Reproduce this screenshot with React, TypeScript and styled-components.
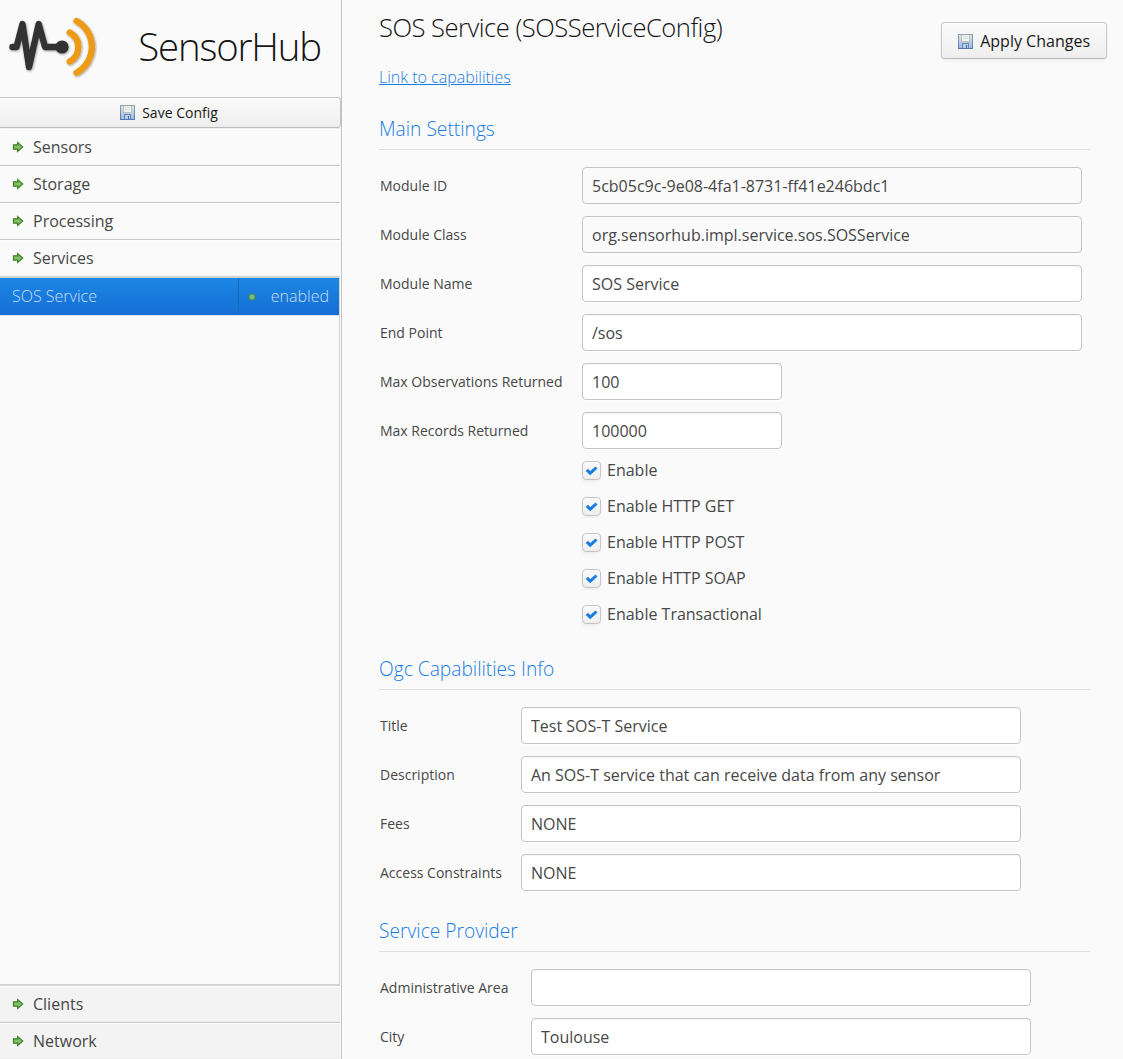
import React from "react";
import styled, { createGlobalStyle, css } from "styled-components";

const GlobalStyle = createGlobalStyle`
  *, *::before, *::after { box-sizing: border-box; }
  html, body { margin: 0; padding: 0; }
  body {
    height: 1059px;
    overflow: hidden;
    background: #fafafa;
    color: #474747;
    font-family: "Open Sans", "Noto Sans", sans-serif;
    font-size: 16px;
    font-weight: 400;
    line-height: 25px;
  }
`;

const Page = styled.div`
  display: flex;
  height: 1059px;
  overflow: hidden;
`;

const Sidebar = styled.aside`
  display: flex;
  flex-direction: column;
  flex: none;
  width: 342px;
  border-right: 1px solid #c5c5c5;
`;

const Brand = styled.header`
  display: flex;
  align-items: center;
  justify-content: space-between;
  flex: none;
  height: 97px;
  padding: 0 20px 3px 6px;
`;

const BrandName = styled.h1`
  margin: 0 0 2px;
  color: #141414;
  font-size: 38.4px;
  font-weight: 300;
  line-height: 48px;
  letter-spacing: -1.152px;
  white-space: nowrap;
`;

const Button = styled.button<{ $wide?: boolean }>`
  display: flex;
  align-items: center;
  justify-content: center;
  flex: none;
  gap: 7px;
  height: 37px;
  padding: 2px 16px 0;
  border: 1px solid #c5c5c5;
  border-bottom-color: #bcbcbc;
  border-radius: 4px;
  background: linear-gradient(#fafafa 2%, #efefef 98%);
  box-shadow: inset 0 1px 0 #fff, inset 0 -1px 0 #ebebeb, 0 2px 3px rgba(0, 0, 0, 0.05);
  color: #191919;
  font: 400 16px/25px "Open Sans", "Noto Sans", sans-serif;
  white-space: nowrap;
  ${(p) =>
    p.$wide &&
    css`
      gap: 7.5px;
      height: 31px;
      width: 341px;
      padding: 0 17.5px 0 15px;
      border-left: 0;
      border-radius: 0 4px 4px 0;
      font-size: 14px;
    `}
`;

const Modules = styled.nav`
  display: flex;
  flex-direction: column;
  flex: 1;
  width: 340px;
  margin: 1px 0 -1px;
`;

const ModuleHeader = styled.div<{ $shaded?: boolean; $open?: boolean }>`
  display: flex;
  align-items: center;
  flex: none;
  gap: 8px;
  height: 37px;
  padding: 0 11px;
  border-bottom: 1px solid ${(p) => (p.$open ? "#d3d3d3" : "#c9c9c9")};
  background: ${(p) => (p.$shaded ? "#f3f3f3" : "#fafafa")};
  box-shadow: inset 0 1px 0 #fff, inset 0 -1px 0 ${(p) => (p.$shaded ? "#efefef" : "#f5f5f5")};
`;

const ModuleBody = styled.div`
  flex: 1;
  border: solid #d3d3d3;
  border-width: 1px 1px 2px 0;
`;

const ModuleRow = styled.div`
  display: flex;
  height: 38px;
  border-bottom: 1px solid #d4dfea;
  background: linear-gradient(#1b87e3, #166ed5);
  color: #c8def4;
  font-weight: 300;
`;

const ModuleName = styled.div`
  display: flex;
  align-items: center;
  width: 239px;
  padding-left: 12px;
  border-right: 1px solid #1d69b4;
`;

const ModuleState = styled.div`
  display: flex;
  align-items: center;
  justify-content: space-between;
  flex: 1;
  padding: 0 10px 0 5px;
`;

const Content = styled.main`
  flex: 1;
  min-width: 0;
  padding: 0 33px 0 37px;
`;

const TopBar = styled.div`
  display: flex;
  align-items: flex-start;
  justify-content: space-between;
  height: 104px;
  margin-right: -17px;
  padding-top: 11px;
`;

const ApplySlot = styled.div`
  padding-top: 11px;
`;

const Title = styled.h2`
  margin: 0 0 20px;
  color: #141414;
  font-size: 25.6px;
  font-weight: 300;
  line-height: 34px;
  letter-spacing: -0.51px;
  white-space: nowrap;
`;

const Link = styled.a`
  display: block;
  color: #197de1;
  font-weight: 300;
  text-decoration: underline;
`;

const Section = styled.section<{ $gap: number }>`
  margin-bottom: ${(p) => p.$gap}px;
`;

const SectionTitle = styled.h3`
  height: 46px;
  margin: 0 0 17px;
  padding-top: 10px;
  border-bottom: 1px solid #dfdfdf;
  color: #197de1;
  font-size: 19.2px;
  font-weight: 300;
  line-height: 30px;
`;

const Field = styled.label<{ $labelWidth: number }>`
  display: grid;
  grid-template-columns: ${(p) => p.$labelWidth}px auto;
  align-items: center;
  justify-content: start;
  height: 37px;
  margin-bottom: 12px;
  padding-left: 1px;
  font-size: 14px;
`;

const Input = styled.input<{ $short?: boolean }>`
  width: ${(p) => (p.$short ? 200 : 500)}px;
  height: 37px;
  padding: 0 9px;
  border: 1px solid #c5c5c5;
  border-radius: 4px;
  outline: 0;
  background: #fff;
  box-shadow: inset 0 1px 0 #f7f7f7, 0 1px 0 #fff;
  color: #474747;
  font: 400 16px/25px "Open Sans", "Noto Sans", sans-serif;

  &:read-only {
    background: #fafafa;
    box-shadow: none;
  }
`;

const Checks = styled.div`
  display: grid;
  grid-auto-rows: 36px;
  margin: -9px 0 0 203px;
`;

const Check = styled.label`
  display: flex;
  align-items: center;
  gap: 6px;
`;

const CheckBox = styled.span`
  display: grid;
  place-items: center;
  width: 19px;
  height: 19px;
  margin-top: 1px;
  border: 1px solid #c5c5c5;
  border-radius: 4px;
  background: linear-gradient(#fafafa 2%, #efefef 98%);
  box-shadow: inset 0 1px 0 #fff, inset 0 -1px 0 #ebebeb, 0 2px 3px rgba(0, 0, 0, 0.05);
`;

const Logo = () => (
  <svg width="96" height="68" viewBox="0 0 96 68" fill="none" strokeLinecap="round" strokeLinejoin="round">
    <defs>
      <filter id="logo-shadow" x="-10%" y="-10%" width="125%" height="125%">
        <feDropShadow dx="0.7" dy="0.9" stdDeviation="0.8" floodOpacity="0.4" />
      </filter>
    </defs>
    <g filter="url(#logo-shadow)" strokeWidth="6.4">
      <path d="M6.500 34h4L16.500 11 23 54 32.700 11 39 34H55" stroke="#333" />
      <circle cx="56" cy="34" r="6.600" fill="#333" />
      <path d="M63.800 19.500A16.600 16.600 0 0 1 63.800 48.500" stroke="#ed9b17" />
      <path d="M70.600 8A29.500 29.500 0 0 1 70.600 59.700" stroke="#ed9b17" />
    </g>
  </svg>
);

const Floppy = () => (
  <svg width="15" height="15" viewBox="0 0 15 15" shapeRendering="crispEdges">
    <defs>
      <linearGradient id="disk" x1="0" y1="0" x2="0" y2="1">
        <stop offset="0" stopColor="#dce5ed" />
        <stop offset="1" stopColor="#9eb9e0" />
      </linearGradient>
      <linearGradient id="disk-edge" x1="0" y1="0" x2="0" y2="1">
        <stop offset="0" stopColor="#94a1a8" />
        <stop offset="1" stopColor="#5579b5" />
      </linearGradient>
    </defs>
    <rect x=".5" y=".5" width="14" height="14" rx="1" fill="url(#disk)" stroke="url(#disk-edge)" />
    <path d="M3 1h9v7H3z" fill="#b9c4c2" />
    <path d="M4 1h7v6H4z" fill="#f1f3ee" />
    <path d="M5 2h5v1H5zM5 4h5v1H5z" fill="#d6dcd6" />
    <path d="M4 9h7v5H4z" fill="#6585bb" />
    <path d="M5 10h5v4H5z" fill="#b9cce9" />
    <path d="M8 11h1v3H8z" fill="#4a6ea9" />
    <path d="M1 14h13v1H1z" fill="#5579b5" />
  </svg>
);

const Arrow = () => (
  <svg width="14" height="14" viewBox="0 0 14 14">
    <path d="M2.500 4.800h4.200V2.500l5 4.500-5 4.500V9.200H2.500z" fill="#86bd6c" stroke="#3b8223" strokeWidth="1.200" />
  </svg>
);

const Dot = () => (
  <svg width="16" height="16" viewBox="0 0 16 16">
    <circle cx="8" cy="8" r="3.100" fill="#80bb7a" stroke="#358a45" strokeWidth=".9" />
    <circle cx="8" cy="8" r="3.900" fill="none" stroke="#4f9c58" strokeWidth=".9" strokeDasharray="1 2.063" strokeDashoffset=".5" />
  </svg>
);

const Tick = () => (
  <svg width="13" height="11" viewBox="0 0 13 11">
    <path d="M1.800 4.900 5.200 8.200 11.500 2.500" fill="none" stroke="#197de1" strokeWidth="3" />
  </svg>
);

type FieldData = { label: string; value: string; short?: boolean; fixed?: boolean };

const mainFields: FieldData[] = [
  { label: "Module ID", value: "5cb05c9c-9e08-4fa1-8731-ff41e246bdc1", fixed: true },
  { label: "Module Class", value: "org.sensorhub.impl.service.sos.SOSService", fixed: true },
  { label: "Module Name", value: "SOS Service" },
  { label: "End Point", value: "/sos" },
  { label: "Max Observations Returned", value: "100", short: true },
  { label: "Max Records Returned", value: "100000", short: true },
];

const capabilityFields: FieldData[] = [
  { label: "Title", value: "Test SOS-T Service" },
  { label: "Description", value: "An SOS-T service that can receive data from any sensor" },
  { label: "Fees", value: "NONE" },
  { label: "Access Constraints", value: "NONE" },
];

const providerFields: FieldData[] = [
  { label: "Administrative Area", value: "" },
  { label: "City", value: "Toulouse" },
];

const options = ["Enable", "Enable HTTP GET", "Enable HTTP POST", "Enable HTTP SOAP", "Enable Transactional"];

const Fields = ({ items, labelWidth }: { items: FieldData[]; labelWidth: number }) => (
  <>
    {items.map((f) => (
      <Field key={f.label} $labelWidth={labelWidth}>
        <span>{f.label}</span>
        <Input defaultValue={f.value} readOnly={f.fixed} $short={f.short} />
      </Field>
    ))}
  </>
);

export default function App() {
  return (
    <>
      <GlobalStyle />
      <Page>
        <Sidebar>
          <Brand>
            <Logo />
            <BrandName>SensorHub</BrandName>
          </Brand>
          <Button $wide>
            <Floppy />
            Save Config
          </Button>
          <Modules>
            {["Sensors", "Storage", "Processing", "Services"].map((name) => (
              <ModuleHeader key={name} $open={name === "Services"}>
                <Arrow />
                {name}
              </ModuleHeader>
            ))}
            <ModuleBody>
              <ModuleRow>
                <ModuleName>SOS Service</ModuleName>
                <ModuleState>
                  <Dot />
                  enabled
                </ModuleState>
              </ModuleRow>
            </ModuleBody>
            {["Clients", "Network"].map((name) => (
              <ModuleHeader key={name} $shaded>
                <Arrow />
                {name}
              </ModuleHeader>
            ))}
          </Modules>
        </Sidebar>
        <Content>
          <TopBar>
            <div>
              <Title>SOS Service (SOSServiceConfig)</Title>
              <Link href="#">Link to capabilities</Link>
            </div>
            <ApplySlot>
              <Button>
                <Floppy />
                Apply Changes
              </Button>
            </ApplySlot>
          </TopBar>
          <Section $gap={12}>
            <SectionTitle>Main Settings</SectionTitle>
            <Fields items={mainFields} labelWidth={202} />
            <Checks>
              {options.map((name) => (
                <Check key={name}>
                  <CheckBox>
                    <Tick />
                  </CheckBox>
                  {name}
                </Check>
              ))}
            </Checks>
          </Section>
          <Section $gap={15}>
            <SectionTitle>Ogc Capabilities Info</SectionTitle>
            <Fields items={capabilityFields} labelWidth={141} />
          </Section>
          <Section $gap={0}>
            <SectionTitle>Service Provider</SectionTitle>
            <Fields items={providerFields} labelWidth={151} />
          </Section>
        </Content>
      </Page>
    </>
  );
}
